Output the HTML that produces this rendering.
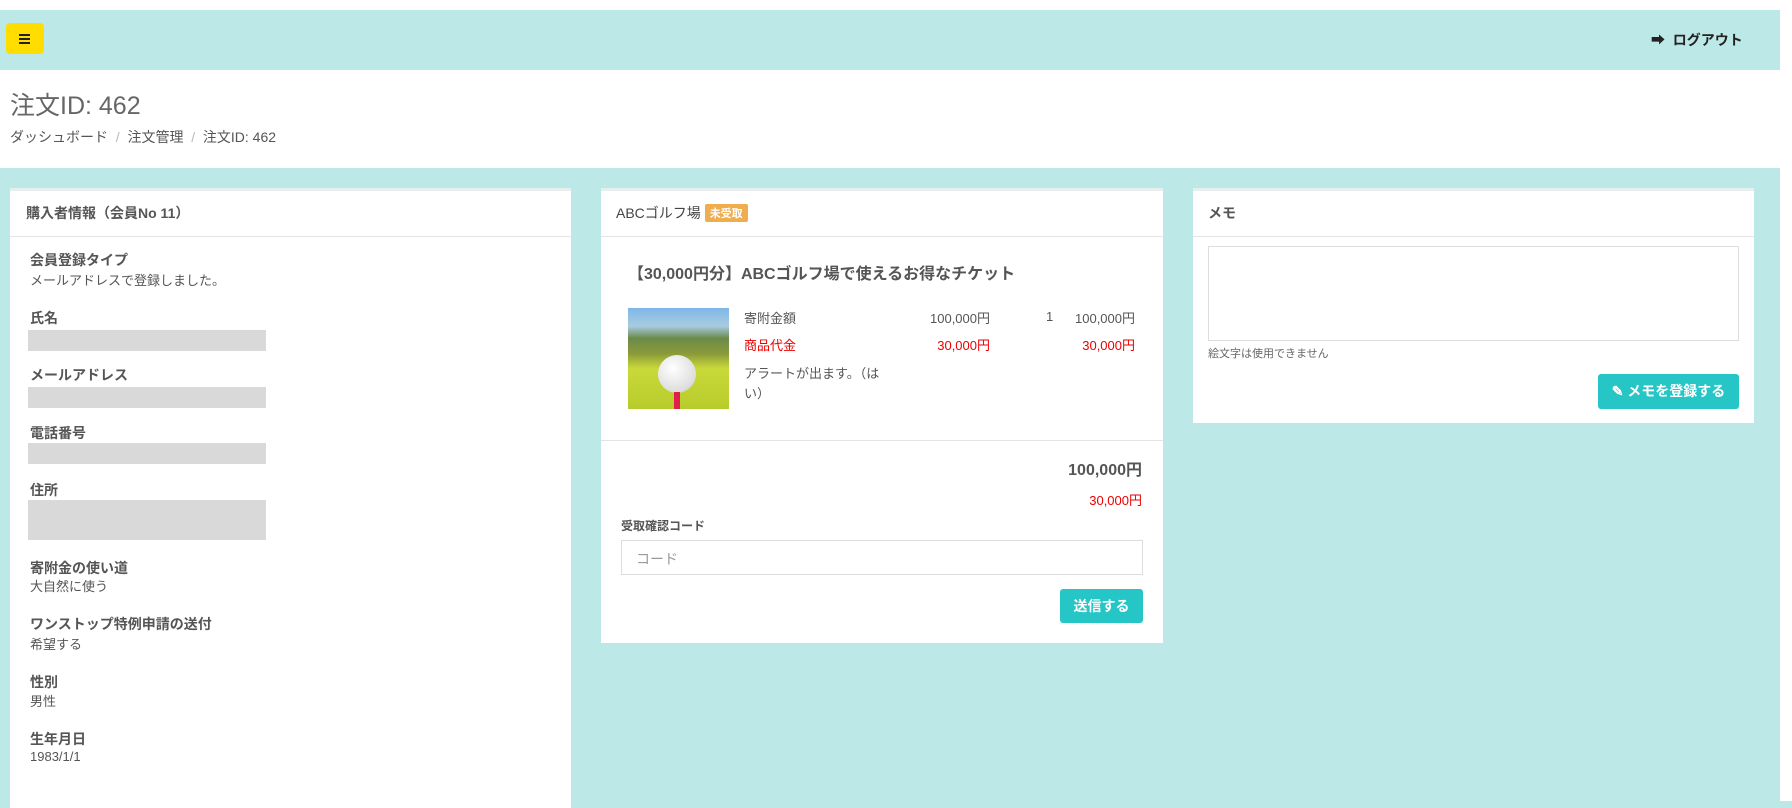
<!DOCTYPE html>
<html><head><meta charset="utf-8"><style>
*{margin:0;padding:0;box-sizing:border-box}
body{width:1792px;height:801px;overflow:hidden;background:#bde8e8;font-family:"Liberation Sans","Noto Sans CJK JP",sans-serif;color:#555;font-size:14px;position:relative}
.a{position:absolute;white-space:nowrap}
.card{position:absolute;background:#fff;border-top:3px solid #e6eeee}
.hd{position:absolute;left:0;right:0;top:0;height:46px;border-bottom:1px solid #e4e4e4}
.lbl{font-weight:bold;color:#555}
.box{position:absolute;width:238px;background:#d9d9d9}
.red{color:#e00}
</style></head><body>
<div class="a" style="left:0;top:0;width:1792px;height:10px;background:#fff"></div>
<div class="a" style="left:1780px;top:0;width:12px;height:801px;background:#fff"></div>
<div class="a" style="left:6px;top:23px;width:38px;height:31px;background:#ffdd00;border-radius:4px"></div>
<div class="a" style="left:19px;top:34px;width:11px;height:2px;background:#222;box-shadow:0 4px 0 #222,0 8px 0 #222"></div>
<div class="a" style="left:1651px;top:30px;font-size:14px;font-weight:bold;color:#222">&#x2B95;&nbsp; ログアウト</div>
<div class="a" style="left:0;top:70px;width:1780px;height:98px;background:#fff"></div>
<div class="a" style="left:10px;top:86px;font-size:25px;color:#666">注文ID: 462</div>
<div class="a" style="left:10px;top:127px;font-size:14px;color:#555">ダッシュボード <span style="color:#bbb">&nbsp;/&nbsp;</span> 注文管理 <span style="color:#bbb">&nbsp;/&nbsp;</span> 注文ID: 462</div>

<div class="card" style="left:10px;top:188px;width:561px;height:620px">
<div class="hd"></div>
<div class="a lbl" style="left:16px;top:12px">購入者情報（会員No 11）</div>
<div class="a lbl" style="left:20px;top:59px">会員登録タイプ</div>
<div class="a" style="left:20px;top:79px;font-size:13px">メールアドレスで登録しました。</div>
<div class="a lbl" style="left:20px;top:117px">氏名</div>
<div class="box" style="left:18px;top:139px;height:21px"></div>
<div class="a lbl" style="left:20px;top:174px">メールアドレス</div>
<div class="box" style="left:18px;top:196px;height:21px"></div>
<div class="a lbl" style="left:20px;top:232px">電話番号</div>
<div class="box" style="left:18px;top:252px;height:21px"></div>
<div class="a lbl" style="left:20px;top:289px">住所</div>
<div class="box" style="left:18px;top:309px;height:40px"></div>
<div class="a lbl" style="left:20px;top:367px">寄附金の使い道</div>
<div class="a" style="left:20px;top:385px;font-size:13px">大自然に使う</div>
<div class="a lbl" style="left:20px;top:423px">ワンストップ特例申請の送付</div>
<div class="a" style="left:20px;top:443px;font-size:13px">希望する</div>
<div class="a lbl" style="left:20px;top:481px">性別</div>
<div class="a" style="left:20px;top:500px;font-size:13px">男性</div>
<div class="a lbl" style="left:20px;top:538px">生年月日</div>
<div class="a" style="left:20px;top:558px;font-size:13px">1983/1/1</div>
</div>

<div class="card" style="left:601px;top:188px;width:562px;height:455px">
<div class="hd"></div>
<div class="a" style="left:15px;top:12px;color:#444">ABCゴルフ場 <span style="display:inline-block;background:#f0ad4e;color:#fff;font-size:11px;font-weight:bold;padding:1px 5px;border-radius:2px;vertical-align:1px">未受取</span></div>
<div class="a" style="left:27px;top:69px;font-size:16px;font-weight:bold;color:#555">【30,000円分】ABCゴルフ場で使えるお得なチケット</div>
<div class="a" style="left:27px;top:117px;width:101px;height:101px;overflow:hidden;background:linear-gradient(#7fb6e8 0%,#a8cce0 18%,#6b8a4a 30%,#8a9a3a 45%,#c9d93a 60%,#b7cc2a 100%)">
 <div class="a" style="left:30px;top:47px;width:38px;height:38px;border-radius:50%;background:radial-gradient(circle at 40% 35%,#fff,#ddd 70%,#bbb)"></div>
 <div class="a" style="left:46px;top:84px;width:6px;height:17px;background:#e0204a"></div>
</div>
<div class="a" style="left:143px;top:117px;font-size:13px">寄附金額</div>
<div class="a" style="left:319px;top:117px;font-size:13px;width:70px;text-align:right">100,000円</div>
<div class="a" style="left:445px;top:118px;font-size:13px">1</div>
<div class="a" style="left:464px;top:117px;font-size:13px;width:70px;text-align:right">100,000円</div>
<div class="a red" style="left:143px;top:144px;font-size:13px">商品代金</div>
<div class="a red" style="left:319px;top:144px;font-size:13px;width:70px;text-align:right">30,000円</div>
<div class="a red" style="left:464px;top:144px;font-size:13px;width:70px;text-align:right">30,000円</div>
<div class="a" style="left:143px;top:173px;font-size:13px;line-height:20px">アラートが出ます。（は<br>い）</div>
<div class="a" style="left:0;top:249px;width:562px;height:1px;background:#e4e4e4"></div>
<div class="a" style="left:396px;top:265px;width:145px;text-align:right;font-size:16px;font-weight:bold">100,000円</div>
<div class="a red" style="left:396px;top:299px;width:145px;text-align:right;font-size:13px">30,000円</div>
<div class="a" style="left:20px;top:326px;font-size:12px;font-weight:bold">受取確認コード</div>
<div class="a" style="left:20px;top:349px;width:522px;height:35px;border:1px solid #ddd;padding:8px 14px;color:#999;font-size:14px">コード</div>
<div class="a" style="left:459px;top:398px;width:83px;height:34px;background:#26c6c6;border-radius:3px;color:#fff;font-weight:bold;text-align:center;line-height:34px">送信する</div>
</div>

<div class="card" style="left:1193px;top:188px;width:561px;height:235px">
<div class="hd"></div>
<div class="a lbl" style="left:15px;top:12px">メモ</div>
<div class="a" style="left:15px;top:55px;width:531px;height:95px;border:1px solid #ddd"></div>
<div class="a" style="left:15px;top:154px;font-size:11px;color:#666">絵文字は使用できません</div>
<div class="a" style="left:405px;top:183px;width:141px;height:35px;background:#26c6c6;border-radius:3px;color:#fff;font-weight:bold;text-align:center;line-height:35px">&#x270E; メモを登録する</div>
</div>
</body></html>
